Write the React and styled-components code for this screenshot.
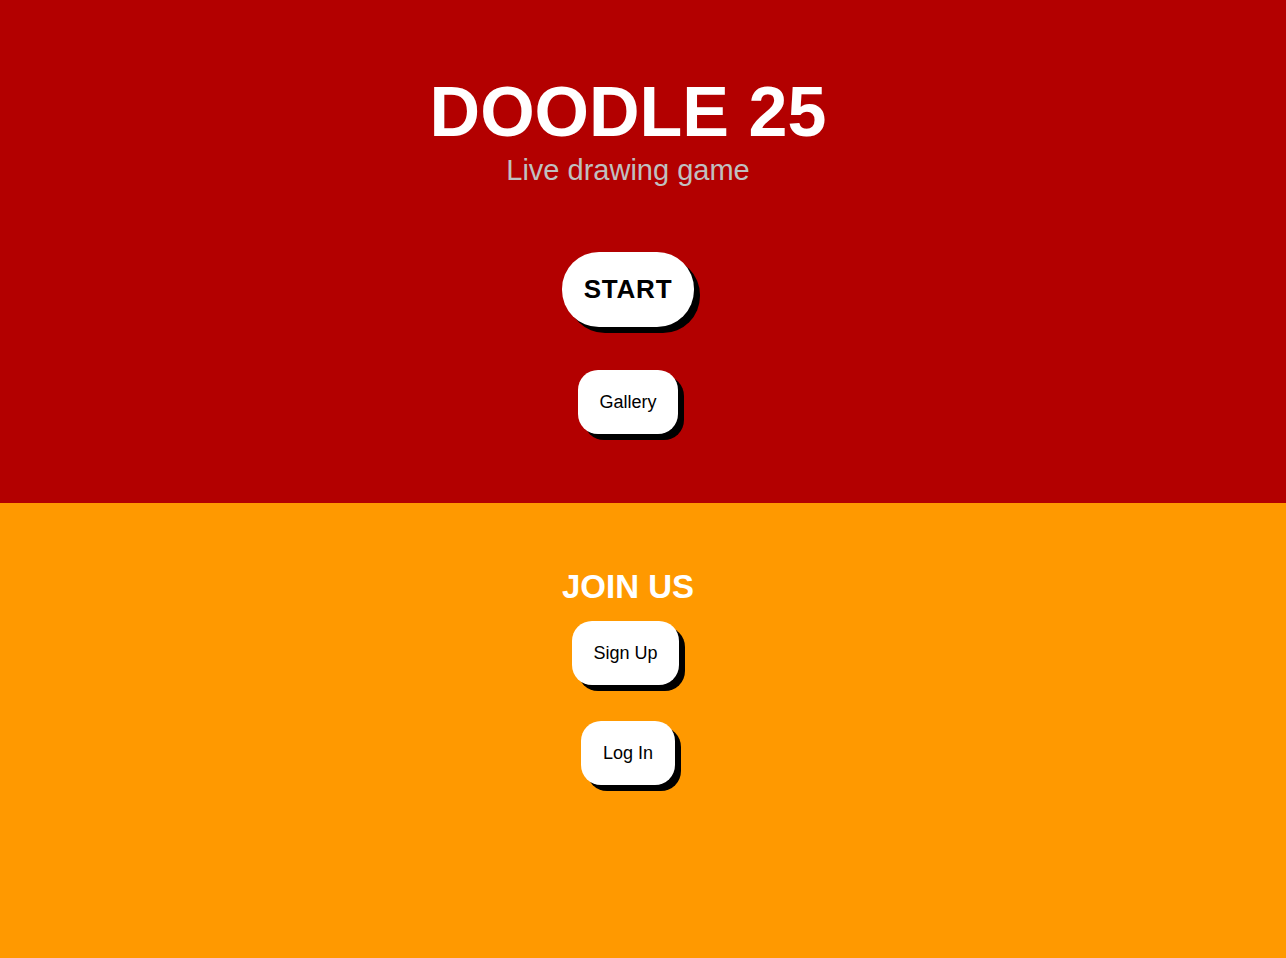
import React from "react";
import styled, { createGlobalStyle } from "styled-components";

const GlobalStyle = createGlobalStyle`
  html, body {
    margin: 0;
    padding: 0;
    font-family: "Liberation Sans", Arial, sans-serif;
  }
`;

const Hero = styled.section`
  background: #b30000;
  height: 503px;
  box-sizing: border-box;
  padding: 72px 30px 0 0;
  display: flex;
  flex-direction: column;
  align-items: center;
`;

const Title = styled.h1`
  margin: 0;
  font-size: 70px;
  font-weight: 700;
  color: #ffffff;
  line-height: normal;
`;

const Subtitle = styled.p`
  margin: 2px 0 65px;
  font-size: 29px;
  color: #c0c0c0;
  line-height: normal;
`;

const Join = styled.section`
  background: #ff9900;
  height: 455px;
  box-sizing: border-box;
  padding: 65px 30px 0 0;
  display: flex;
  flex-direction: column;
  align-items: center;
`;

const JoinTitle = styled.h2`
  margin: 0 0 15px;
  font-size: 33px;
  font-weight: 700;
  color: #ffffff;
  line-height: normal;
`;

const Button = styled.button`
  border: none;
  background: #ffffff;
  color: #000000;
  font-family: "Liberation Sans", Arial, sans-serif;
  font-size: ${(p) => (p.$big ? "26px" : "18px")};
  font-weight: ${(p) => (p.$big ? 700 : 400)};
  letter-spacing: ${(p) => (p.$big ? "0.8px" : "normal")};
  line-height: normal;
  padding: ${(p) => (p.$big ? "22px 22px" : "21.6px 21.6px")};
  border-radius: ${(p) => (p.$big ? "37px" : "20px")};
  box-shadow: 6px 6px 0 #000000;
  margin-bottom: ${(p) => p.$gap || 0}px;
  margin-right: ${(p) => p.$shift || 0}px;
  cursor: pointer;
`;

export default function App() {
  return (
    <>
      <GlobalStyle />
      <Hero>
        <Title>DOODLE 25</Title>
        <Subtitle>Live drawing game</Subtitle>
        <Button $big $gap={43}>START</Button>
        <Button>Gallery</Button>
      </Hero>
      <Join>
        <JoinTitle>JOIN US</JoinTitle>
        <Button $gap={36} $shift={5}>Sign Up</Button>
        <Button>Log In</Button>
      </Join>
    </>
  );
}
